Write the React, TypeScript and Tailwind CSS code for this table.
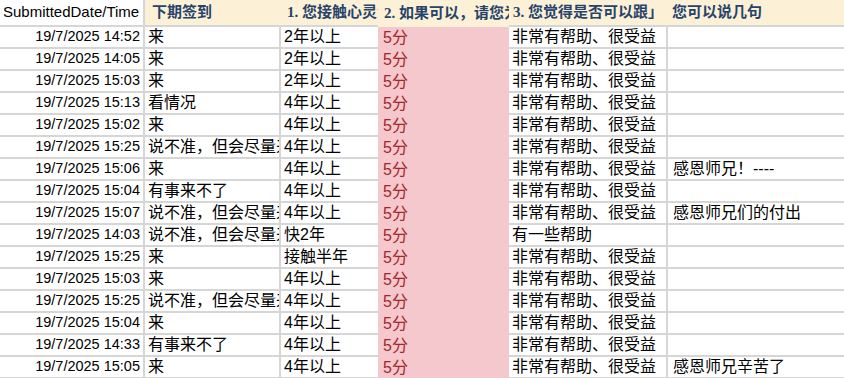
const rows: [string, string, string, string, string][] = [
  ["19/7/2025 14:52", "来", "2年以上", "非常有帮助、很受益", ""],
  ["19/7/2025 14:05", "来", "2年以上", "非常有帮助、很受益", ""],
  ["19/7/2025 15:03", "来", "2年以上", "非常有帮助、很受益", ""],
  ["19/7/2025 15:13", "看情况", "4年以上", "非常有帮助、很受益", ""],
  ["19/7/2025 15:02", "来", "4年以上", "非常有帮助、很受益", ""],
  ["19/7/2025 15:25", "说不准，但会尽量来", "4年以上", "非常有帮助、很受益", ""],
  ["19/7/2025 15:06", "来", "4年以上", "非常有帮助、很受益", "感恩师兄！----"],
  ["19/7/2025 15:04", "有事来不了", "4年以上", "非常有帮助、很受益", ""],
  ["19/7/2025 15:07", "说不准，但会尽量来", "4年以上", "非常有帮助、很受益", "感恩师兄们的付出"],
  ["19/7/2025 14:03", "说不准，但会尽量来", "快2年", "有一些帮助", ""],
  ["19/7/2025 15:25", "来", "接触半年", "非常有帮助、很受益", ""],
  ["19/7/2025 15:03", "来", "4年以上", "非常有帮助、很受益", ""],
  ["19/7/2025 15:25", "说不准，但会尽量来", "4年以上", "非常有帮助、很受益", ""],
  ["19/7/2025 15:04", "来", "4年以上", "非常有帮助、很受益", ""],
  ["19/7/2025 14:33", "有事来不了", "4年以上", "非常有帮助、很受益", ""],
  ["19/7/2025 15:05", "来", "4年以上", "非常有帮助、很受益", "感恩师兄辛苦了"],
];

const cjk = { fontFamily: '"Liberation Sans", "Noto Sans CJK SC", sans-serif' };
const head = { fontFamily: '"Liberation Serif", "Noto Sans CJK SC", serif' };

export default function App() {
  return (
    <div className="w-[844px] h-[378px] overflow-hidden bg-white text-black">
      {/* Header row */}
      <div className="flex h-[27px] bg-[#fcf1d7] text-[15px] font-bold text-[#26436b]" style={head}>
        <div
          className="w-[145px] shrink-0 flex items-center pl-[3px] bg-white border-r-2 border-b-2 border-[#d6d6d6] font-normal text-black text-[15px] whitespace-nowrap overflow-hidden"
          style={cjk}
        >
          SubmittedDate/Time
        </div>
        <div className="w-[136px] shrink-0 flex items-center pl-[7px] border-b-2 border-[#d6d6d6] whitespace-nowrap overflow-hidden">
          下期签到
        </div>
        <div className="w-[97px] shrink-0 flex items-center pl-[6px] border-b-2 border-[#d6d6d6] whitespace-nowrap overflow-hidden">
          1. 您接触心灵法门多久了
        </div>
        <div className="w-[131px] shrink-0 flex items-center pl-[6px] whitespace-nowrap overflow-hidden">
          2. 如果可以，请您为本次共修打分
        </div>
        <div className="w-[159px] shrink-0 flex items-center pl-[4px] border-b-2 border-[#d6d6d6] whitespace-nowrap overflow-hidden">
          3. 您觉得是否可以跟」
        </div>
        <div className="flex-1 flex items-center pl-[4px] border-b-2 border-[#d6d6d6] whitespace-nowrap overflow-hidden">
          您可以说几句
        </div>
      </div>

      {/* Data rows */}
      {rows.map((r, i) => (
        <div key={i} className="flex h-[22px] text-[16px]" style={cjk}>
          <div className="w-[145px] shrink-0 flex items-center justify-end pr-[3px] border-r-2 border-b-2 border-[#d6d6d6] text-[14.5px] whitespace-nowrap">
            {r[0]}
          </div>
          <div className="w-[136px] shrink-0 flex items-center pl-[3px] border-r-2 border-b-2 border-[#d6d6d6] whitespace-nowrap overflow-hidden">
            {r[1]}
          </div>
          <div className="w-[97px] shrink-0 flex items-center pl-[3px] border-b-2 border-[#d6d6d6] whitespace-nowrap overflow-hidden">
            {r[2]}
          </div>
          <div className="w-[131px] shrink-0 flex items-center pl-[5px] bg-[#f5c8cd] text-[#a4262c] whitespace-nowrap">
            5分
          </div>
          <div className="w-[159px] shrink-0 flex items-center pl-[3px] border-r-2 border-b-2 border-[#d6d6d6] whitespace-nowrap overflow-hidden">
            {r[3]}
          </div>
          <div className="flex-1 flex items-center pl-[5px] border-b-2 border-[#d6d6d6] whitespace-nowrap overflow-hidden">
            {r[4]}
          </div>
        </div>
      ))}
    </div>
  );
}
